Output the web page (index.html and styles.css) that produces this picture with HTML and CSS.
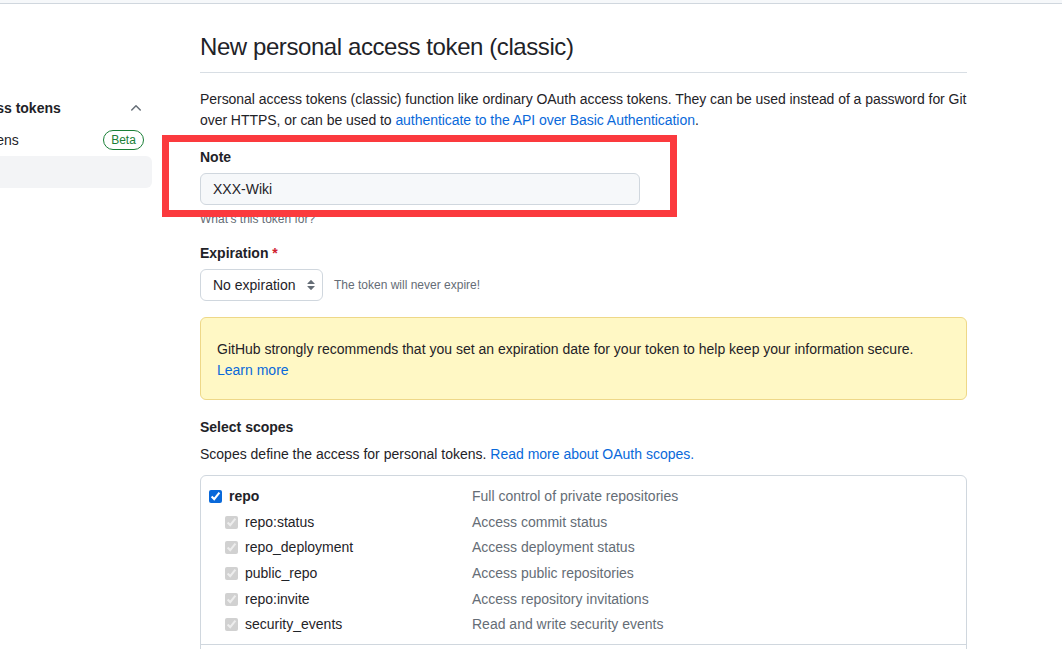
FILE: index.html
```html
<!DOCTYPE html>
<html lang="en">
<head>
<meta charset="utf-8">
<title>New personal access token (classic)</title>
<link rel="stylesheet" href="styles.css">
</head>
<body>
<div class="topbar"></div>
<div class="layout">
  <nav class="sidebar">
    <div class="side-inner">
      <div class="nav-head">
        <span class="nav-title">Personal access tokens</span>
        <svg class="chev" width="16" height="16" viewBox="0 0 16 16"><path d="M3.22 10.53a.749.749 0 0 1 0-1.06l4.25-4.25a.749.749 0 0 1 1.06 0l4.25 4.25a.749.749 0 1 1-1.06 1.06L8 6.811 4.28 10.53a.749.749 0 0 1-1.06 0Z"/></svg>
      </div>
      <div class="nav-item"><span>Fine-grained tokens</span><span class="beta">Beta</span></div>
      <div class="nav-item selected"><span>Tokens (classic)</span></div>
    </div>
  </nav>
  <main class="main">
    <h1 class="subhead">New personal access token (classic)</h1>
    <p class="intro">Personal access tokens (classic) function like ordinary OAuth access tokens. They can be used instead of a password for Git<br>over HTTPS, or can be used to <a href="#">authenticate to the API over Basic Authentication</a>.</p>

    <div class="group note-group">
      <label class="label" for="note">Note</label>
      <input class="text-input" id="note" type="text" value="XXX-Wiki">
      <p class="hint">What’s this token for?</p>
      <div class="highlight"></div>
    </div>

    <div class="group exp-group">
      <label class="label">Expiration <span class="req">*</span></label>
      <div class="select-row">
        <div class="select">No expiration
          <svg class="sel-icon" width="16" height="16" viewBox="0 0 16 16"><path d="M4.427 9.573l3.396 3.396a.25.25 0 00.354 0l3.396-3.396A.25.25 0 0011.396 9H4.604a.25.25 0 00-.177.427zM4.427 6.427l3.396-3.396a.25.25 0 01.354 0l3.396 3.396A.25.25 0 0111.396 7H4.604a.25.25 0 01-.177-.427z"/></svg>
        </div>
        <span class="sel-note">The token will never expire!</span>
      </div>
    </div>

    <div class="flash">GitHub strongly recommends that you set an expiration date for your token to help keep your information secure.<br><a href="#">Learn more</a></div>

    <div class="scopes-head">Select scopes</div>
    <p class="scopes-desc">Scopes define the access for personal tokens. <a href="#">Read more about OAuth scopes.</a></p>

    <div class="scope-box">
      <div class="scope-group">
        <div class="scope-row">
          <label class="scope-name top"><input type="checkbox" checked><span>repo</span></label>
          <span class="scope-desc">Full control of private repositories</span>
        </div>
        <div class="scope-row">
          <label class="scope-name sub"><input type="checkbox" checked disabled><span>repo:status</span></label>
          <span class="scope-desc">Access commit status</span>
        </div>
        <div class="scope-row">
          <label class="scope-name sub"><input type="checkbox" checked disabled><span>repo_deployment</span></label>
          <span class="scope-desc">Access deployment status</span>
        </div>
        <div class="scope-row">
          <label class="scope-name sub"><input type="checkbox" checked disabled><span>public_repo</span></label>
          <span class="scope-desc">Access public repositories</span>
        </div>
        <div class="scope-row">
          <label class="scope-name sub"><input type="checkbox" checked disabled><span>repo:invite</span></label>
          <span class="scope-desc">Access repository invitations</span>
        </div>
        <div class="scope-row">
          <label class="scope-name sub"><input type="checkbox" checked disabled><span>security_events</span></label>
          <span class="scope-desc">Read and write security events</span>
        </div>
      </div>
      <div class="scope-group next">
        <div class="scope-row">
          <label class="scope-name top"><input type="checkbox"><span>workflow</span></label>
          <span class="scope-desc">Update GitHub Action workflows</span>
        </div>
      </div>
    </div>
  </main>
</div>
</body>
</html>
```

FILE: styles.css
```css
* { box-sizing: border-box; }

html, body {
  margin: 0;
  padding: 0;
  background: #ffffff;
}

body {
  font-family: "Liberation Sans", Arial, sans-serif;
  font-size: 14px;
  line-height: 21px;
  color: #1f2328;
  overflow: hidden;
}

a {
  color: #0969da;
  text-decoration: none;
}

.topbar {
  height: 4px;
  background: #f6f8fa;
  border-bottom: 1px solid #d0d7de;
}

.layout {
  display: flex;
  align-items: flex-start;
}

/* ---------- sidebar ---------- */
.sidebar {
  width: 152px;
  flex: 0 0 152px;
  overflow: hidden;
  margin-top: 88px;
}

.side-inner {
  margin-left: -106px;
  width: 258px;
}

.nav-head {
  height: 32px;
  display: flex;
  align-items: center;
  justify-content: space-between;
  padding: 0 8px 0 8px;
}

.nav-title {
  font-weight: 600;
  white-space: nowrap;
}

.chev {
  fill: #656d76;
}

.nav-item {
  height: 32px;
  display: flex;
  align-items: center;
  justify-content: space-between;
  padding: 0 8px 0 1px;
  border-radius: 6px;
  font-size: 14px;
  white-space: nowrap;
}

.nav-item.selected {
  background: #f3f4f6;
}

.beta {
  display: inline-flex;
  align-items: center;
  justify-content: center;
  height: 20px;
  width: 41px;
  border: 1px solid #1a7f37;
  border-radius: 10px;
  color: #1a7f37;
  font-size: 12px;
  font-weight: 500;
  line-height: 18px;
}

/* ---------- main ---------- */
.main {
  width: 767px;
  margin-left: 48px;
  padding-top: 25px;
}

.subhead {
  margin: 0;
  font-size: 24px;
  font-weight: 400;
  line-height: 36px;
  letter-spacing: -0.42px;
  padding-bottom: 7px;
  border-bottom: 1px solid #d8dee4;
}

.intro {
  margin: 16px 0 0;
  white-space: nowrap;
  letter-spacing: -0.05px;
}

.group {
  margin-top: 16px;
}

.exp-group {
  margin-top: 15px;
}

.note-group {
  position: relative;
}

.label {
  display: block;
  font-weight: 600;
  margin-bottom: 5px;
}

.req {
  color: #cf222e;
}

.text-input {
  display: block;
  width: 440px;
  height: 32px;
  padding: 5px 12px;
  font: inherit;
  color: #1f2328;
  background: #f6f8fa;
  border: 1px solid #d0d7de;
  border-radius: 6px;
  outline: none;
}

.hint {
  margin: 5px 0 0;
  font-size: 12px;
  line-height: 18px;
  color: #656d76;
}

.highlight {
  position: absolute;
  left: -38px;
  top: -12px;
  width: 515px;
  height: 82px;
  border: 7px solid #fb3a3e;
  pointer-events: none;
}

.select-row {
  display: flex;
  align-items: center;
  gap: 11px;
}

.select {
  display: flex;
  align-items: center;
  justify-content: space-between;
  width: 123px;
  height: 32px;
  padding: 0 3px 0 12px;
  background: #ffffff;
  border: 1px solid #d0d7de;
  border-radius: 6px;
  white-space: nowrap;
}

.sel-icon {
  fill: #656d76;
  flex: 0 0 16px;
}

.sel-note {
  font-size: 12px;
  color: #656d76;
}

.flash {
  margin-top: 16px;
  padding: 21px 16px 18px;
  background: #fff8c5;
  border: 1px solid #eed888;
  border-radius: 6px;
  white-space: nowrap;
}

.scopes-head {
  margin-top: 17px;
  font-weight: 600;
}

.scopes-desc {
  margin: 6px 0 0;
}

.scope-box {
  margin-top: 10px;
  border: 1px solid #d0d7de;
  border-radius: 6px;
}

.scope-group {
  padding: 8px 8px 6px;
}

.scope-group.next {
  border-top: 1px solid #d0d7de;
}

.scope-row {
  display: grid;
  grid-template-columns: 263px 1fr;
  align-items: center;
  height: 25.6px;
}

.scope-name {
  display: flex;
  align-items: center;
  gap: 7px;
  white-space: nowrap;
}

.scope-name.top span {
  font-weight: 600;
}

.scope-name.sub {
  padding-left: 16px;
}

.scope-name input {
  margin: 0;
  width: 13px;
  height: 13px;
  accent-color: #0969da;
}

.scope-desc {
  color: #656d76;
}
```
